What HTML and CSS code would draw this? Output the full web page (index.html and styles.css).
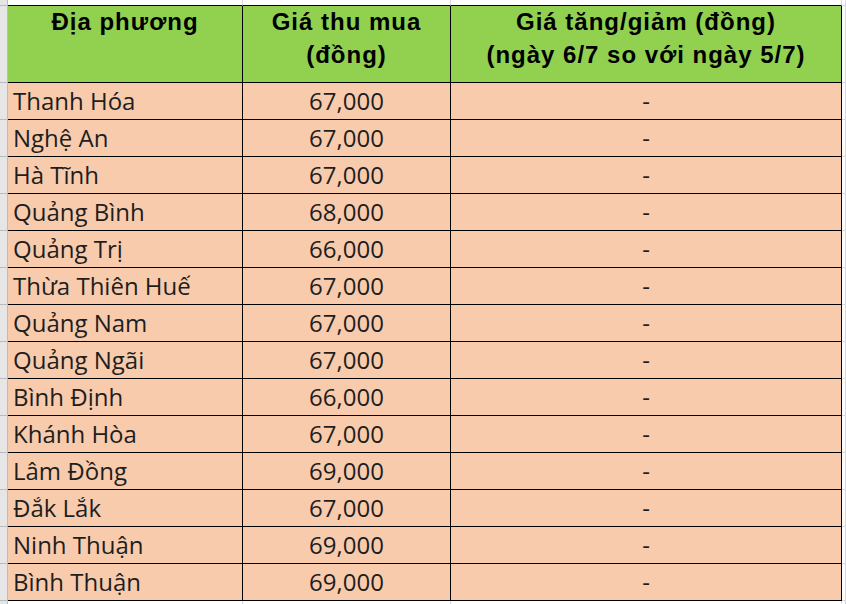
FILE: index.html
```html
<!DOCTYPE html>
<html lang="vi">
<head>
<meta charset="utf-8">
<title>Giá thu mua</title>
<link rel="stylesheet" href="styles.css">
</head>
<body>
<div class="sheet">
  <div class="g"></div><div class="t"></div><div class="t"></div><div class="t"></div><div class="x"></div>

  <div class="g"></div>
  <div class="h">Địa phương</div>
  <div class="h">Giá thu mua<br>(đồng)</div>
  <div class="h">Giá tăng/giảm (đồng)<br>(ngày 6/7 so với ngày 5/7)</div>
  <div class="x"></div>

  <div class="g"></div><div class="d name">Thanh Hóa</div><div class="d num">67,000</div><div class="d num">-</div><div class="x"></div>
  <div class="g"></div><div class="d name">Nghệ An</div><div class="d num">67,000</div><div class="d num">-</div><div class="x"></div>
  <div class="g"></div><div class="d name">Hà Tĩnh</div><div class="d num">67,000</div><div class="d num">-</div><div class="x"></div>
  <div class="g"></div><div class="d name">Quảng Bình</div><div class="d num">68,000</div><div class="d num">-</div><div class="x"></div>
  <div class="g"></div><div class="d name">Quảng Trị</div><div class="d num">66,000</div><div class="d num">-</div><div class="x"></div>
  <div class="g"></div><div class="d name">Thừa Thiên Huế</div><div class="d num">67,000</div><div class="d num">-</div><div class="x"></div>
  <div class="g"></div><div class="d name">Quảng Nam</div><div class="d num">67,000</div><div class="d num">-</div><div class="x"></div>
  <div class="g"></div><div class="d name">Quảng Ngãi</div><div class="d num">67,000</div><div class="d num">-</div><div class="x"></div>
  <div class="g"></div><div class="d name">Bình Định</div><div class="d num">66,000</div><div class="d num">-</div><div class="x"></div>
  <div class="g"></div><div class="d name">Khánh Hòa</div><div class="d num">67,000</div><div class="d num">-</div><div class="x"></div>
  <div class="g"></div><div class="d name">Lâm Đồng</div><div class="d num">69,000</div><div class="d num">-</div><div class="x"></div>
  <div class="g"></div><div class="d name">Đắk Lắk</div><div class="d num">67,000</div><div class="d num">-</div><div class="x"></div>
  <div class="g"></div><div class="d name">Ninh Thuận</div><div class="d num">69,000</div><div class="d num">-</div><div class="x"></div>
  <div class="g"></div><div class="d name">Bình Thuận</div><div class="d num">69,000</div><div class="d num">-</div><div class="x"></div>

  <div class="g last"></div><div class="b"></div><div class="b"></div><div class="b"></div><div class="b"></div>
</div>
</body>
</html>
```
FILE: styles.css
```css
* { box-sizing: border-box; }
html, body { margin: 0; padding: 0; background: #ffffff; }
body { width: 846px; height: 604px; overflow: hidden; }

.sheet {
  display: grid;
  grid-template-columns: 8px 235px 208px 391px 4px;
  grid-template-rows: 6px 77px repeat(14, 37px) 3px;
  width: 846px;
}

.g {
  background: #e6e6e6;
  border-right: 1px solid #bcbcbc;
  border-bottom: 1px solid #bcbcbc;
}
.g.last { border-bottom: none; }

.t {
  border-right: 1px solid #d9d9d9;
  border-bottom: 1px solid #000000;
}

.x {
  border-right: 1px solid #d9d9d9;
  border-bottom: 1px solid #d9d9d9;
}

.b { border-right: 1px solid #d9d9d9; }

.h {
  background: #92d050;
  border-right: 1px solid #000000;
  border-bottom: 1px solid #000000;
  font-family: "Liberation Sans", Arial, sans-serif;
  font-weight: bold;
  font-size: 24px;
  letter-spacing: 1px;
  line-height: 32.5px;
  text-align: center;
  color: #000000;
}

.d {
  background: #f8cbad;
  border-right: 1px solid #000000;
  border-bottom: 1px solid #000000;
  font-family: "Open Sans", "Noto Sans", sans-serif;
  font-size: 24px;
  line-height: 36px;
  color: #1e1e1e;
  white-space: nowrap;
}

.name { padding-left: 5px; }
.num { text-align: center; }
```
